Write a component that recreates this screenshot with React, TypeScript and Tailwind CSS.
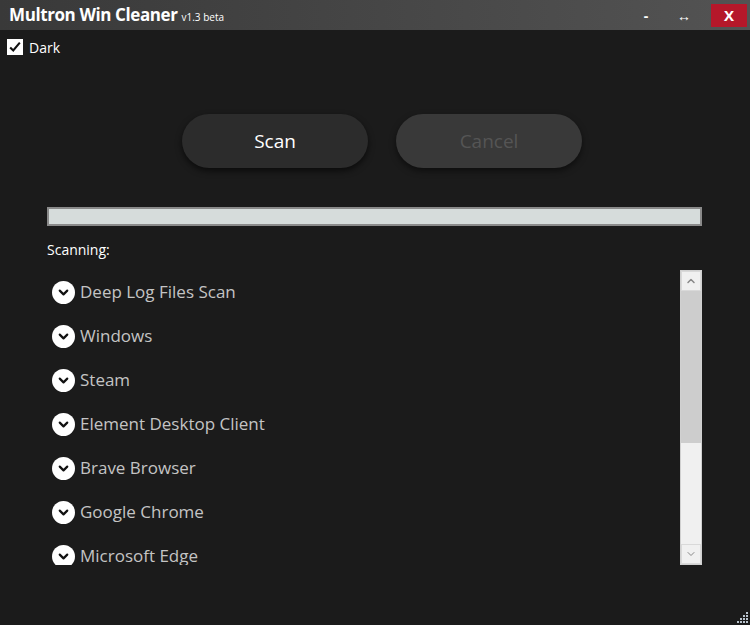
import { ChevronDown, ChevronUp } from "lucide-react";

const items = [
  "Deep Log Files Scan",
  "Windows",
  "Steam",
  "Element Desktop Client",
  "Brave Browser",
  "Google Chrome",
  "Microsoft Edge",
];

const font = { fontFamily: '"Open Sans", "Noto Sans", sans-serif' };

const App: React.FC = () => {
  return (
    <div className="w-[750px] h-[625px] bg-[#1b1b1b] flex flex-col overflow-hidden relative" style={font}>
      {/* title bar */}
      <div className="h-[30px] flex items-center bg-gradient-to-r from-[#393939] to-[#535353] shrink-0">
        <div className="pl-[9px] flex items-baseline gap-[4px]">
          <span className="text-white font-bold text-[17px] tracking-[-0.4px]">Multron Win Cleaner</span>
          <span className="text-white text-[10px]">v1.3 beta</span>
        </div>
        <div className="ml-auto flex items-center h-full">
          <span className="text-white font-bold text-[14px] w-[20px] text-center mr-[18px]">-</span>
          <span className="text-white text-[14px] w-[20px] text-center mr-[17px]">↔</span>
          <div className="w-[36px] h-[23px] bg-[#b5182a] flex items-center justify-center text-white font-bold text-[15px] mr-[3px] mt-[1px]">X</div>
        </div>
      </div>

      {/* dark toggle */}
      <label className="flex items-center gap-[6px] pl-[7px] pt-[4px] h-[30px]">
        <span className="w-[16px] h-[16px] bg-white flex items-center justify-center">
          <svg viewBox="0 0 16 16" className="w-[14px] h-[14px]">
            <path d="M2.5 8.5 L6 12 L13.5 3" fill="none" stroke="#111" strokeWidth="2.4" />
          </svg>
        </span>
        <span className="text-white text-[14px]">Dark</span>
      </label>

      {/* buttons */}
      <div className="flex justify-center gap-[28px] mt-[54px] pl-[14px]">
        <button className="w-[186px] h-[54px] rounded-full bg-[#2c2c2c] text-white text-[19px] shadow-[0_3px_6px_rgba(0,0,0,0.6)]">
          Scan
        </button>
        <button className="w-[186px] h-[54px] rounded-full bg-[#393939] text-[#555] text-[19px] shadow-[0_3px_6px_rgba(0,0,0,0.5)]">
          Cancel
        </button>
      </div>

      {/* progress */}
      <div className="mx-[47px] mt-[39px] w-[655px] h-[19px] border-2 border-[#8a8a8a] bg-[#d6dcdb]" />

      <div className="ml-[47px] mt-[13px] text-white text-[14px]">Scanning:</div>

      {/* list */}
      <div className="ml-[47px] mt-[10px] w-[655px] h-[295px] flex">
        <div className="flex-1 overflow-hidden">
          {items.map((name) => (
            <div key={name} className="h-[44px] flex items-center">
              <span className="ml-[5px] w-[23px] h-[23px] rounded-full bg-white flex items-center justify-center">
                <ChevronDown size={15} strokeWidth={3.5} color="#111" />
              </span>
              <span className="ml-[5px] text-[#c4c4c4] text-[17px]">{name}</span>
            </div>
          ))}
        </div>
        <div className="w-[22px] h-full bg-[#f0f0f0] border border-[#d0d0d0] flex flex-col">
          <div className="h-[20px] border border-[#d9d9d9] flex items-center justify-center">
            <ChevronUp size={12} strokeWidth={3} color="#888" />
          </div>
          <div className="h-[152px] bg-[#cdcdcd]" />
          <div className="flex-1" />
          <div className="h-[20px] border border-[#d9d9d9] flex items-center justify-center">
            <ChevronDown size={12} strokeWidth={2} color="#888" />
          </div>
        </div>
      </div>

      {/* resize grip */}
      <svg className="absolute right-[1px] bottom-[1px]" width="12" height="12" viewBox="0 0 12 12">
        {[
          [9, 0], [9, 3], [6, 3], [9, 6], [6, 6], [3, 6], [9, 9], [6, 9], [3, 9], [0, 9],
        ].map(([x, y], i) => (
          <rect key={i} x={x} y={y} width="2" height="2" fill="#b8c2cc" />
        ))}
      </svg>
    </div>
  );
};

export default App;
